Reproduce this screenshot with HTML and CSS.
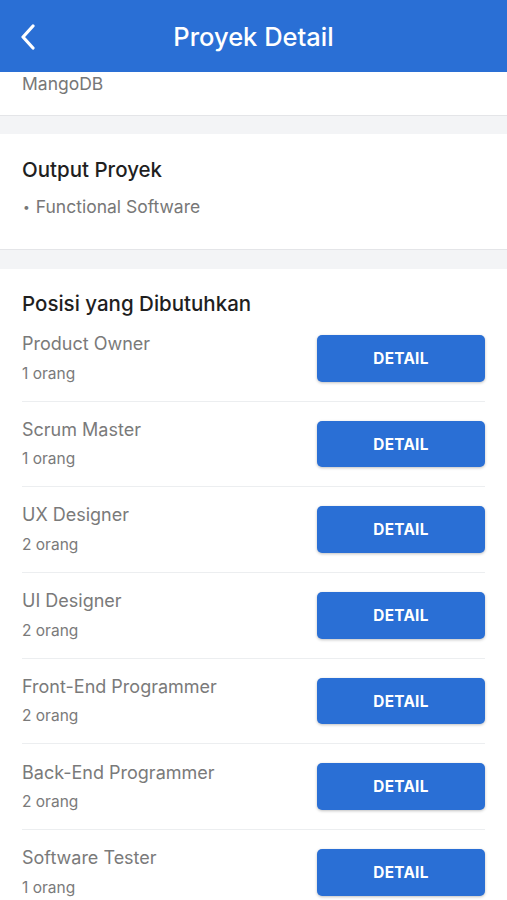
FILE: index.html
```html
<!DOCTYPE html>
<html lang="id">
  <head>
    <meta charset="UTF-8" />
    <meta name="viewport" content="width=device-width, initial-scale=1.0" />
    <title>Proyek Detail</title>
    <link rel="stylesheet" href="styles.css">
  </head>
  <body>
    <header class="topbar">
      <button class="backButt" aria-label="Kembali">
        <svg width="16" height="26" viewBox="0 0 16 26">
          <path d="M13 2 L3 13 L13 24" fill="none" stroke="#fff" stroke-width="3.2" stroke-linecap="round" stroke-linejoin="round" />
        </svg>
      </button>
      <h1>Proyek Detail</h1>
    </header>
    <main>
      <section class="card cardTop">
        <p class="muted">MangoDB</p>
      </section>
      <section class="card cardOutput">
        <h2>Output Proyek</h2>
        <ul class="bullets">
          <li>Functional Software</li>
        </ul>
      </section>
      <section class="card cardPosisi">
        <h2>Posisi yang Dibutuhkan</h2>
        <ul class="posList">
          <li>
            <div class="posInfo">
              <p class="posName">Product Owner</p>
              <p class="posCount">1 orang</p>
            </div>
            <button class="detailButt">DETAIL</button>
          </li>
          <li>
            <div class="posInfo">
              <p class="posName">Scrum Master</p>
              <p class="posCount">1 orang</p>
            </div>
            <button class="detailButt">DETAIL</button>
          </li>
          <li>
            <div class="posInfo">
              <p class="posName">UX Designer</p>
              <p class="posCount">2 orang</p>
            </div>
            <button class="detailButt">DETAIL</button>
          </li>
          <li>
            <div class="posInfo">
              <p class="posName">UI Designer</p>
              <p class="posCount">2 orang</p>
            </div>
            <button class="detailButt">DETAIL</button>
          </li>
          <li>
            <div class="posInfo">
              <p class="posName">Front-End Programmer</p>
              <p class="posCount">2 orang</p>
            </div>
            <button class="detailButt">DETAIL</button>
          </li>
          <li>
            <div class="posInfo">
              <p class="posName">Back-End Programmer</p>
              <p class="posCount">2 orang</p>
            </div>
            <button class="detailButt">DETAIL</button>
          </li>
          <li>
            <div class="posInfo">
              <p class="posName">Software Tester</p>
              <p class="posCount">1 orang</p>
            </div>
            <button class="detailButt">DETAIL</button>
          </li>
        </ul>
      </section>
    </main>
  </body>
</html>
```

FILE: styles.css
```css
* {
  margin: 0;
  padding: 0;
  box-sizing: border-box;
  font-family: Inter, "Noto Sans", sans-serif;
}

body {
  background: #f3f4f6;
  height: 900px;
  overflow: hidden;
}

.topbar {
  height: 72px;
  background: #2a6fd5;
  display: flex;
  align-items: center;
  justify-content: center;
  position: relative;
}

.topbar h1 {
  color: #fff;
  font-size: 25.5px;
  font-weight: 500;
  line-height: 30px;
  margin-top: 2px;
}

.backButt {
  position: absolute;
  left: 20px;
  top: 24px;
  background: none;
  border: none;
  display: flex;
}

.card {
  background: #fff;
  padding: 0 22px;
}

.card h2 {
  font-size: 20.5px;
  font-weight: 500;
  color: #1f1f1f;
  line-height: 24px;
}

.muted {
  color: #777;
  font-size: 17.5px;
  line-height: 22px;
}

.cardTop {
  padding-top: 1px;
  height: 44px;
  border-bottom: 1px solid #e4e5e8;
}

.cardOutput {
  margin-top: 18px;
  padding-top: 24px;
  height: 116px;
  border-bottom: 1px solid #e4e5e8;
}

.bullets {
  list-style: none;
  margin-top: 14px;
}

.bullets li {
  color: #777;
  font-size: 17.5px;
  line-height: 22px;
}

.bullets li::before {
  content: "\2022";
  margin-right: 7px;
  font-size: 12px;
  position: relative;
  top: -2px;
  left: 1px;
}

.cardPosisi {
  margin-top: 19px;
  padding-top: 23px;
  min-height: 640px;
}

.posList {
  list-style: none;
}

.posList li {
  display: flex;
  align-items: center;
  justify-content: space-between;
  padding: 19px 0 19px;
  border-bottom: 1px solid #eceef0;
}

.posName {
  color: #7a7a7a;
  font-size: 18px;
  line-height: 17.5px;
}

.posCount {
  color: #7a7a7a;
  font-size: 15.5px;
  line-height: 16px;
  margin-top: 13px;
}

.detailButt {
  width: 168px;
  height: 46.7px;
  border: none;
  border-radius: 5px;
  background: #2a6fd5;
  color: #fff;
  font-size: 15.3px;
  font-weight: 700;
  letter-spacing: 0.3px;
  box-shadow: 0px 1px 3px rgba(0, 0, 0, 0.25);
}
```
